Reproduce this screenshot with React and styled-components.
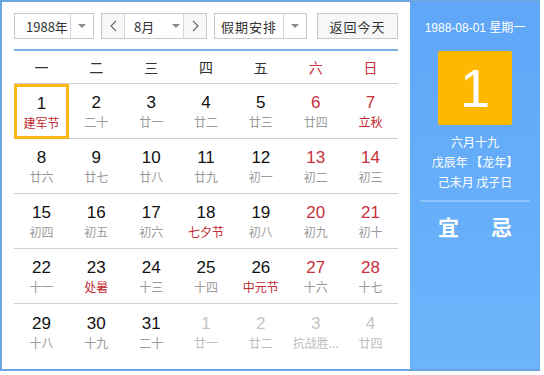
import styled, { createGlobalStyle } from "styled-components";

const GlobalStyle = createGlobalStyle`
  body {
    margin: 0;
    background: #fff;
    font-family: "Liberation Sans", "Noto Sans CJK SC", sans-serif;
  }
`;

const Calendar = styled.div`
  display: flex;
  width: 540px;
  height: 371px;
  box-sizing: border-box;
  border: 2px solid #6aa6e2;
  border-right: none;
  background: #fff;
`;

const Main = styled.div`
  width: 408px;
  box-sizing: border-box;
  padding: 11px 12px 0 12px;
  display: flex;
  flex-direction: column;
`;

const Toolbar = styled.div`
  display: flex;
  align-items: center;
  height: 26px;
  padding-bottom: 10px;
  border-bottom: 2px solid #7eb2e0;
`;

const Select = styled.div`
  display: flex;
  height: 26px;
  box-sizing: border-box;
  border: 1px solid #c9c9c9;
  width: ${(p) => p.$w}px;
  margin-right: ${(p) => p.$mr || 0}px;
  font-size: 13px;
  color: #333;
  background: #fff;
`;

const SelectText = styled.div`
  flex: 1;
  display: flex;
  align-items: center;
  justify-content: ${(p) => (p.$center ? "center" : "flex-start")};
  padding-left: ${(p) => (p.$center ? 0 : 11)}px;
  font-family: "Noto Sans CJK SC", sans-serif;
  letter-spacing: ${(p) => p.$ls || 0}px;
`;

const Arrow = styled.div`
  width: 22px;
  border-left: 1px solid #d6d6d6;
  display: flex;
  align-items: center;
  justify-content: center;
  &::after {
    content: "";
    border-left: 4px solid transparent;
    border-right: 4px solid transparent;
    border-top: 4px solid #8a8a8a;
  }
`;

const NavBtn = styled.div`
  width: 22px;
  display: flex;
  align-items: center;
  justify-content: center;
  background: #f7f7f7;
  border-${(p) => p.$side}: 1px solid #d6d6d6;
`;

const MonthText = styled.div`
  flex: 1;
  display: flex;
  align-items: center;
  padding-left: 9px;
  font-family: "Noto Sans CJK SC", sans-serif;
`;

const MonthArrow = styled.div`
  width: 14px;
  display: flex;
  align-items: center;
  justify-content: center;
  &::after {
    content: "";
    border-left: 4px solid transparent;
    border-right: 4px solid transparent;
    border-top: 4px solid #8a8a8a;
  }
`;

const TodayBtn = styled.div`
  margin-left: auto;
  width: 81px;
  height: 26px;
  box-sizing: border-box;
  border: 1px solid #c9c9c9;
  background: #f7f7f7;
  display: flex;
  align-items: center;
  justify-content: center;
  font-size: 13px;
  letter-spacing: 1px;
  color: #333;
  font-family: "Noto Sans CJK SC", sans-serif;
`;

const Grid = styled.div`
  display: grid;
  grid-template-columns: repeat(7, 1fr);
`;

const WeekHead = styled.div`
  height: 32px;
  display: flex;
  align-items: center;
  justify-content: center;
  font-size: 14px;
  font-family: "Noto Sans CJK SC", sans-serif;
  color: ${(p) => (p.$weekend ? "#c8303c" : "#333")};
  border-bottom: 1px solid #cfcfcf;
`;

const Cell = styled.div`
  height: 55px;
  box-sizing: border-box;
  display: flex;
  flex-direction: column;
  align-items: center;
  justify-content: center;
  gap: 2px;
  border-bottom: ${(p) => (p.$last ? "none" : "1px solid #cfcfcf")};
  border: ${(p) => (p.$selected ? "3px solid #fbb917" : undefined)};
`;

const DayNum = styled.div`
  font-size: 17px;
  line-height: 19px;
  color: ${(p) => (p.$other ? "#c4c4c4" : p.$weekend ? "#c8303c" : "#111")};
`;

const Lunar = styled.div`
  font-size: 12px;
  line-height: 15px;
  font-family: "Noto Sans CJK SC", sans-serif;
  color: ${(p) => (p.$other ? "#bdbdbd" : p.$fest ? "#c02a32" : "#9a9a9a")};
`;

const Side = styled.div`
  width: 130px;
  background: linear-gradient(#5fa6f7, #6db4fc);
  display: flex;
  flex-direction: column;
  align-items: center;
  color: #fff;
  font-family: "Noto Sans CJK SC", sans-serif;
`;

const SideDate = styled.div`
  margin-top: 18px;
  font-size: 12px;
  line-height: 16px;
  font-family: "Liberation Sans", "Noto Sans CJK SC", sans-serif;
`;

const BigDay = styled.div`
  margin-top: 15px;
  width: 74px;
  height: 74px;
  border-radius: 2px;
  background: #ffb800;
  display: flex;
  align-items: center;
  justify-content: center;
  font-family: "Liberation Sans", sans-serif;
  font-size: 54px;
`;

const Info = styled.div`
  margin-top: 7px;
  font-size: 12px;
  line-height: 20px;
  text-align: center;
`;

const Divider = styled.div`
  width: 110px;
  height: 2px;
  background: #8cc4fb;
  margin-top: 8px;
`;

const Yiji = styled.div`
  margin-top: 9px;
  display: flex;
  gap: 32px;
  font-size: 21px;
  font-weight: bold;
`;

const Chevron = ({ dir }) => (
  <svg width="7" height="12" viewBox="0 0 7 12">
    <polyline
      points={dir === "left" ? "6,1 1,6 6,11" : "1,1 6,6 1,11"}
      fill="none"
      stroke="#666"
      strokeWidth="1.1"
    />
  </svg>
);

const weekDays = ["一", "二", "三", "四", "五", "六", "日"];

const days = [
  [1, "建军节", 1], [2, "二十"], [3, "廿一"], [4, "廿二"], [5, "廿三"], [6, "廿四"], [7, "立秋", 1],
  [8, "廿六"], [9, "廿七"], [10, "廿八"], [11, "廿九"], [12, "初一"], [13, "初二"], [14, "初三"],
  [15, "初四"], [16, "初五"], [17, "初六"], [18, "七夕节", 1], [19, "初八"], [20, "初九"], [21, "初十"],
  [22, "十一"], [23, "处暑", 1], [24, "十三"], [25, "十四"], [26, "中元节", 1], [27, "十六"], [28, "十七"],
  [29, "十八"], [30, "十九"], [31, "二十"], [1, "廿一", 0, 1], [2, "廿二", 0, 1], [3, "抗战胜...", 0, 1], [4, "廿四", 0, 1],
];

export default function App() {
  return (
    <>
      <GlobalStyle />
      <Calendar>
        <Main>
          <Toolbar>
            <Select $w={80} $mr={7}>
              <SelectText>1988年</SelectText>
              <Arrow />
            </Select>
            <Select $w={106} $mr={7}>
              <NavBtn $side="right"><Chevron dir="left" /></NavBtn>
              <MonthText>8月</MonthText>
              <MonthArrow />
              <NavBtn $side="left"><Chevron dir="right" /></NavBtn>
            </Select>
            <Select $w={93}>
              <SelectText $center $ls={1}>假期安排</SelectText>
              <Arrow />
            </Select>
            <TodayBtn>返回今天</TodayBtn>
          </Toolbar>
          <Grid>
            {weekDays.map((w, i) => (
              <WeekHead key={w} $weekend={i >= 5}>{w}</WeekHead>
            ))}
            {days.map(([n, l, fest, other], i) => (
              <Cell key={i} $selected={i === 0} $last={i >= 28}>
                <DayNum $weekend={i % 7 >= 5} $other={other}>{n}</DayNum>
                <Lunar $fest={fest} $other={other}>{l}</Lunar>
              </Cell>
            ))}
          </Grid>
        </Main>
        <Side>
          <SideDate>1988-08-01 星期一</SideDate>
          <BigDay>1</BigDay>
          <Info>
            <div>六月十九</div>
            <div>戊辰年 【龙年】</div>
            <div>己未月 戊子日</div>
          </Info>
          <Divider />
          <Yiji>
            <span>宜</span>
            <span>忌</span>
          </Yiji>
        </Side>
      </Calendar>
    </>
  );
}
